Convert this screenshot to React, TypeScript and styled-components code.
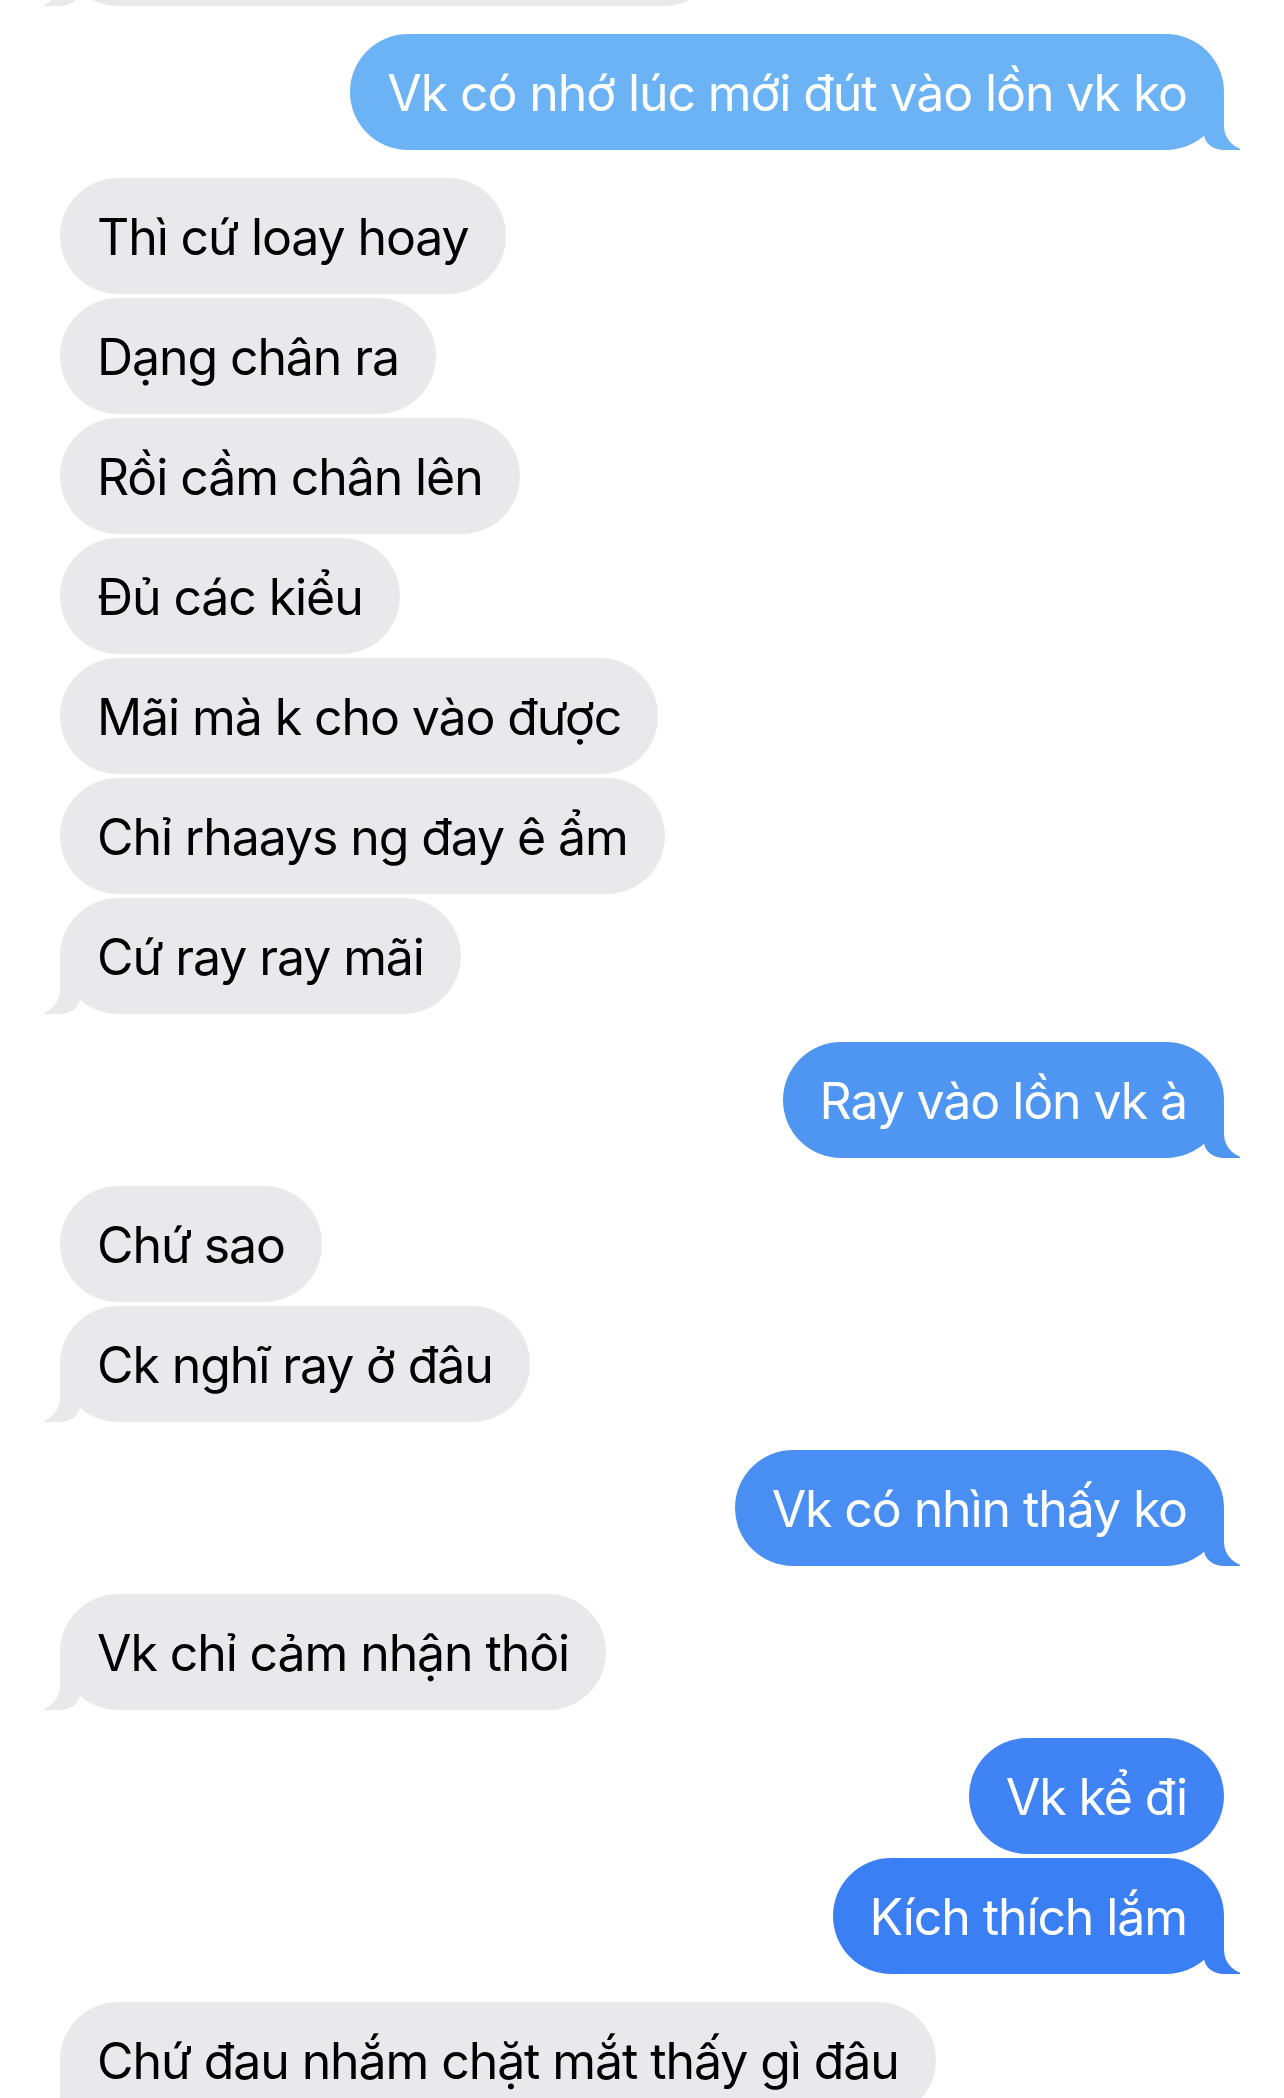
import React from "react";
import styled, { createGlobalStyle } from "styled-components";

const GlobalStyle = createGlobalStyle`
  html, body {
    margin: 0;
    padding: 0;
    background: #ffffff;
  }
  body {
    width: 1284px;
    height: 2098px;
    overflow: hidden;
    font-family: Inter, "Noto Sans", "Liberation Sans", sans-serif;
    -webkit-font-smoothing: antialiased;
  }
`;

const Thread = styled.main`
  box-sizing: border-box;
  width: 1284px;
  height: 2098px;
  overflow: hidden;
  padding: 0 60px;
  display: flex;
  flex-direction: column;
  gap: 28px;
`;

const Group = styled.section<{ $me?: boolean; $cut?: boolean }>`
  display: flex;
  flex-direction: column;
  align-items: ${(p) => (p.$me ? "flex-end" : "flex-start")};
  gap: 4px;
  margin-top: ${(p) => (p.$cut ? "-110px" : "0")};
`;

const Bubble = styled.div<{ $me?: boolean; $tone: string; $tail?: boolean; $w?: number }>`
  position: relative;
  box-sizing: border-box;
  min-height: 116px;
  ${(p) => (p.$w ? `width: ${p.$w}px;` : "")}
  padding: 26px 37px 24px;
  border-radius: 58px;
  background: ${(p) => p.$tone};
  color: ${(p) => (p.$me ? "#ffffff" : "#000000")};
  font-size: 50px;
  line-height: 66px;
  letter-spacing: -1.1px;
  white-space: nowrap;

  &::before,
  &::after {
    content: "";
    position: absolute;
    bottom: 0;
    display: ${(p) => (p.$tail ? "block" : "none")};
  }

  &::before {
    height: 56px;
    width: 36px;
    background: ${(p) => p.$tone};
    ${(p) =>
      p.$me
        ? `right: -16px; border-bottom-left-radius: 20px 16px;`
        : `left: -16px; border-bottom-right-radius: 20px 16px;`}
  }

  &::after {
    height: 56px;
    width: 40px;
    background: #ffffff;
    ${(p) =>
      p.$me
        ? `right: -40px; border-bottom-left-radius: 24px;`
        : `left: -40px; border-bottom-right-radius: 24px;`}
  }
`;

const GRAY = "#e9e9eb";

type Msg = { text: string; tone?: string };
type Block = { me: boolean; msgs: Msg[]; cut?: boolean; w?: number };

const blocks: Block[] = [
  { me: false, cut: true, w: 662, msgs: [{ text: "" }] },
  { me: true, msgs: [{ text: "Vk có nhớ lúc mới đút vào lồn vk ko", tone: "#6bb3f4" }] },
  {
    me: false,
    msgs: [
      { text: "Thì cứ loay hoay" },
      { text: "Dạng chân ra" },
      { text: "Rồi cầm chân lên" },
      { text: "Đủ các kiểu" },
      { text: "Mãi mà k cho vào được" },
      { text: "Chỉ rhaays ng đay ê ẩm" },
      { text: "Cứ ray ray mãi" },
    ],
  },
  { me: true, msgs: [{ text: "Ray vào lồn vk à", tone: "#4f95f2" }] },
  { me: false, msgs: [{ text: "Chứ sao" }, { text: "Ck nghĩ ray ở đâu" }] },
  { me: true, msgs: [{ text: "Vk có nhìn thấy ko", tone: "#498ef2" }] },
  { me: false, msgs: [{ text: "Vk chỉ cảm nhận thôi" }] },
  {
    me: true,
    msgs: [
      { text: "Vk kể đi", tone: "#3f83f4" },
      { text: "Kích thích lắm", tone: "#3b7ff5" },
    ],
  },
  { me: false, msgs: [{ text: "Chứ đau nhắm chặt mắt thấy gì đâu" }] },
];

export default function App() {
  return (
    <>
      <GlobalStyle />
      <Thread>
        {blocks.map((b, i) => (
          <Group key={i} $me={b.me} $cut={b.cut}>
            {b.msgs.map((m, j) => (
              <Bubble
                key={j}
                $me={b.me}
                $tone={m.tone ?? GRAY}
                $tail={j === b.msgs.length - 1}
                $w={b.w}
              >
                {m.text}
              </Bubble>
            ))}
          </Group>
        ))}
      </Thread>
    </>
  );
}
